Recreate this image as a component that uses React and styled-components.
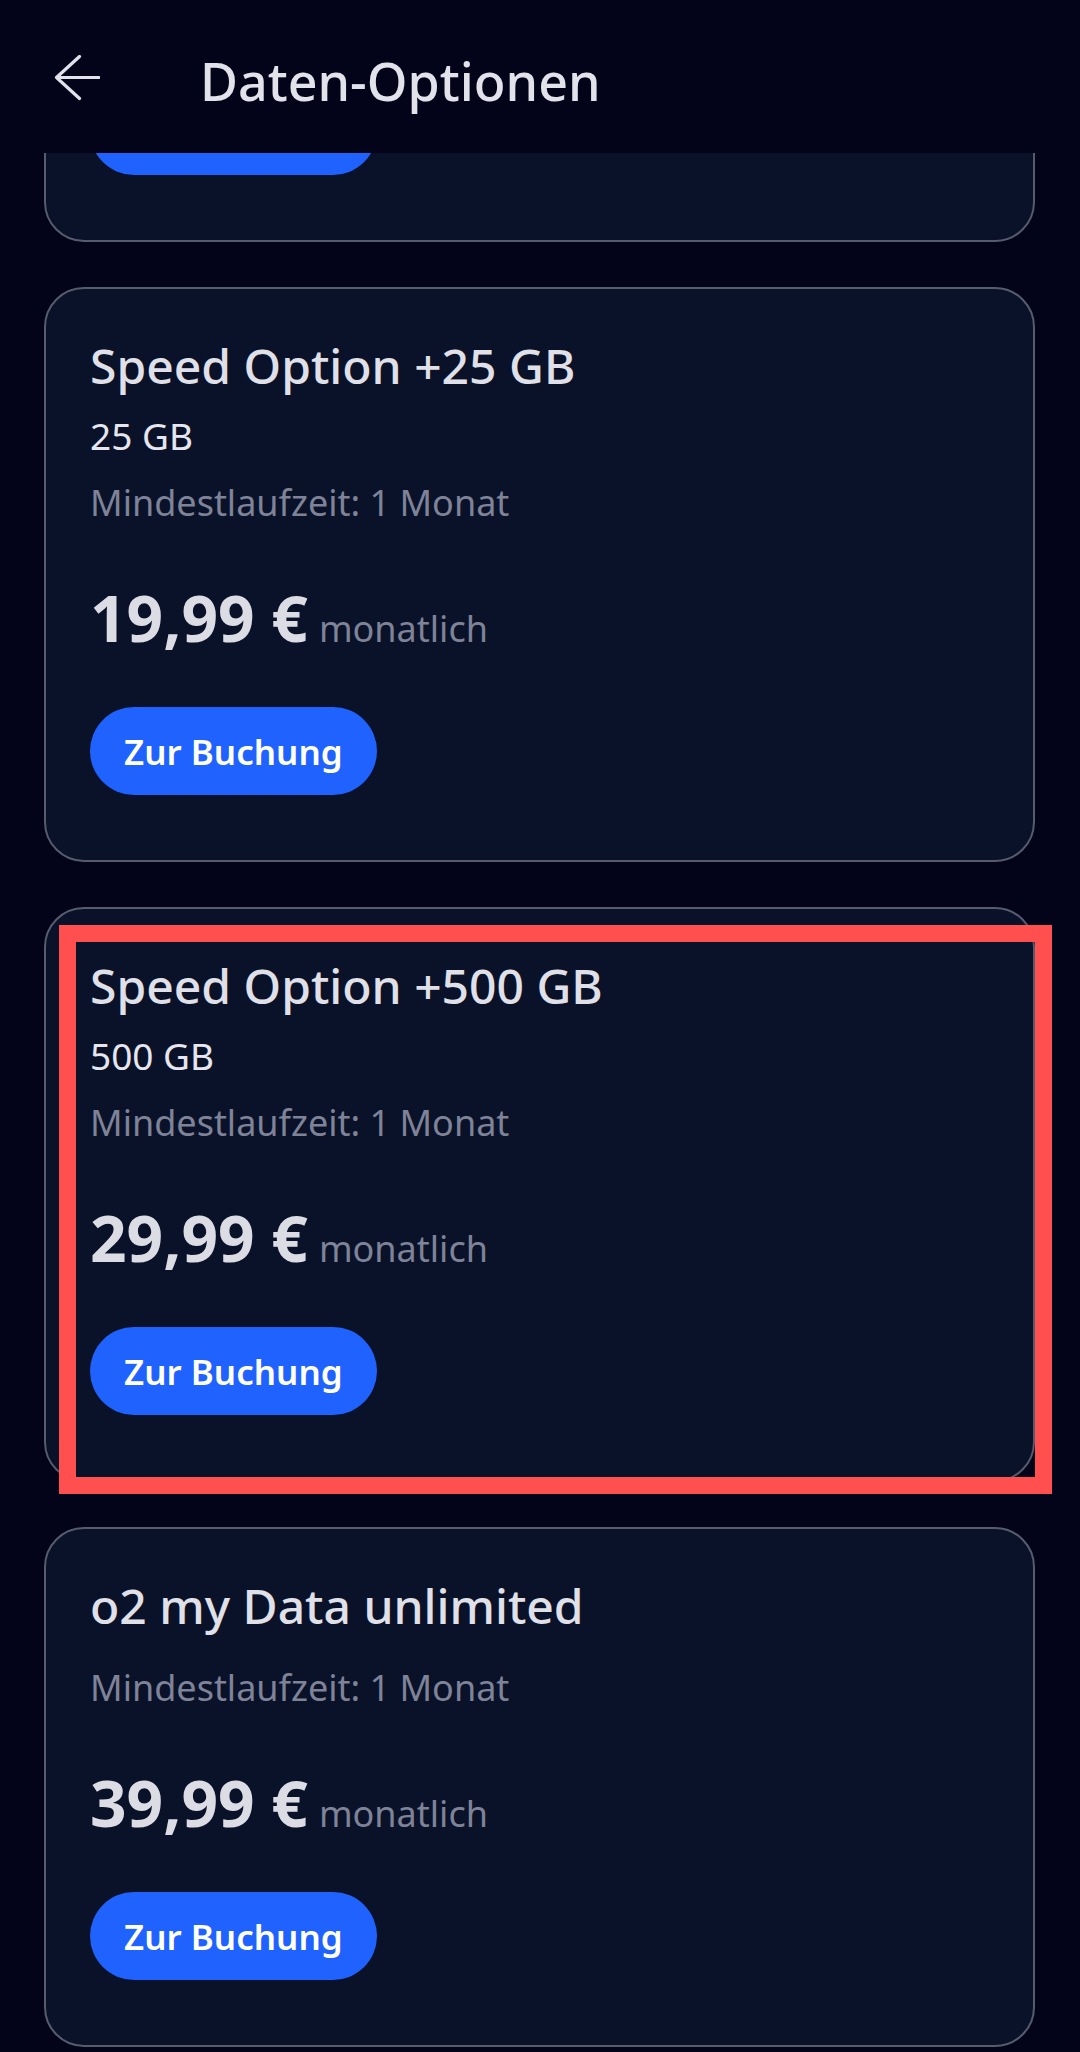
import React from "react";
import styled, { createGlobalStyle } from "styled-components";

const options = [
	{
		title: "Speed Option +5 GB",
		data: "5 GB",
		term: "Mindestlaufzeit: 1 Monat",
		price: "9,99 €",
	},
	{
		title: "Speed Option +25 GB",
		data: "25 GB",
		term: "Mindestlaufzeit: 1 Monat",
		price: "19,99 €",
	},
	{
		title: "Speed Option +500 GB",
		data: "500 GB",
		term: "Mindestlaufzeit: 1 Monat",
		price: "29,99 €",
		highlighted: true,
	},
	{
		title: "o2 my Data unlimited",
		term: "Mindestlaufzeit: 1 Monat",
		price: "39,99 €",
	},
];

export default function App() {
	return (
		<>
			<GlobalStyle />
			<Page>
				<Header>
					<BackButton aria-label="Zurück">
						<svg width="46" height="46" viewBox="0 0 46 46" fill="none">
							<path
								d="M45 22.5H2.5M25.5 1.5L2.5 22.5L25.5 43.5"
								stroke="#e2e2ea"
								strokeWidth="3.2"
								strokeLinecap="round"
								strokeLinejoin="round"
							/>
						</svg>
					</BackButton>
					<HeaderTitle>Daten-Optionen</HeaderTitle>
				</Header>

				{/* list is scrolled: the first card sits mostly under the header */}
				<Viewport>
					<OptionList $offset={486}>
						{options.map((o) => (
							<Card key={o.title}>
								<CardTitle>{o.title}</CardTitle>
								{o.data && <DataAmount>{o.data}</DataAmount>}
								<Term $tight={!!o.data}>{o.term}</Term>
								<PriceRow>
									<Price>{o.price}</Price>
									<Period>monatlich</Period>
								</PriceRow>
								<BookButton>Zur Buchung</BookButton>
								{o.highlighted && <Highlight />}
							</Card>
						))}
					</OptionList>
				</Viewport>
			</Page>
		</>
	);
}

const GlobalStyle = createGlobalStyle`
	body {
		margin: 0;
		background: #03041a;
		font-family: "Noto Sans", "Open Sans", sans-serif;
	}
	* {
		box-sizing: border-box;
	}
`;

const Page = styled.div`
	width: 1080px;
	height: 2052px;
	background: #03041a;
	display: flex;
	flex-direction: column;
	overflow: hidden;
`;

const Header = styled.header`
	position: relative;
	z-index: 1;
	height: 153px;
	flex-shrink: 0;
	display: flex;
	align-items: center;
	padding: 8px 0 0 54px;
	background: #03031a;
`;

const BackButton = styled.button`
	width: 46px;
	height: 46px;
	padding: 0;
	margin: 0 100px 6px 0;
	border: none;
	background: none;
	display: flex;
`;

const HeaderTitle = styled.h1`
	margin: 0;
	font-size: 52px;
	line-height: 64px;
	font-weight: 500;
	color: #e2e2ea;
`;

const Viewport = styled.main`
	flex: 1;
	overflow: hidden;
`;

const OptionList = styled.div`
	display: flex;
	flex-direction: column;
	gap: 45px;
	padding: 0 45px 0 44px;
	margin-top: -${(p) => p.$offset}px;
`;

const Card = styled.section`
	position: relative;
	display: flex;
	flex-direction: column;
	align-items: flex-start;
	padding: 47px 44px 65px;
	background: #0a1229;
	border: 2px solid #565b6e;
	border-radius: 40px;
`;

const CardTitle = styled.h2`
	margin: 0;
	font-size: 48px;
	line-height: 60px;
	font-weight: 500;
	color: #e0e0e8;
`;

const DataAmount = styled.p`
	margin: 16px 0 0;
	font-size: 37px;
	line-height: 48px;
	color: #e6e6ee;
`;

const Term = styled.p`
	margin: ${(p) => (p.$tight ? "19px" : "28px")} 0 0;
	font-size: 36px;
	line-height: 48px;
	color: #7f8398;
`;

const PriceRow = styled.div`
	display: flex;
	align-items: baseline;
	gap: 11px;
	margin-top: 53px;
`;

const Price = styled.span`
	font-size: 64px;
	line-height: 76px;
	font-weight: 700;
	color: #dcdce4;
`;

const Period = styled.span`
	font-size: 36px;
	color: #7f8398;
`;

const BookButton = styled.button`
	margin-top: 51px;
	height: 88px;
	padding: 0 34px;
	border: none;
	border-radius: 44px;
	background: #1f62fd;
	color: #ffffff;
	font-family: "Noto Sans", "Open Sans", sans-serif;
	font-size: 35px;
	font-weight: 600;
`;

const Highlight = styled.div`
	position: absolute;
	top: 16px;
	left: 13px;
	right: -19px;
	bottom: -14px;
	border: 17px solid #ff4f4f;
	pointer-events: none;
`;
